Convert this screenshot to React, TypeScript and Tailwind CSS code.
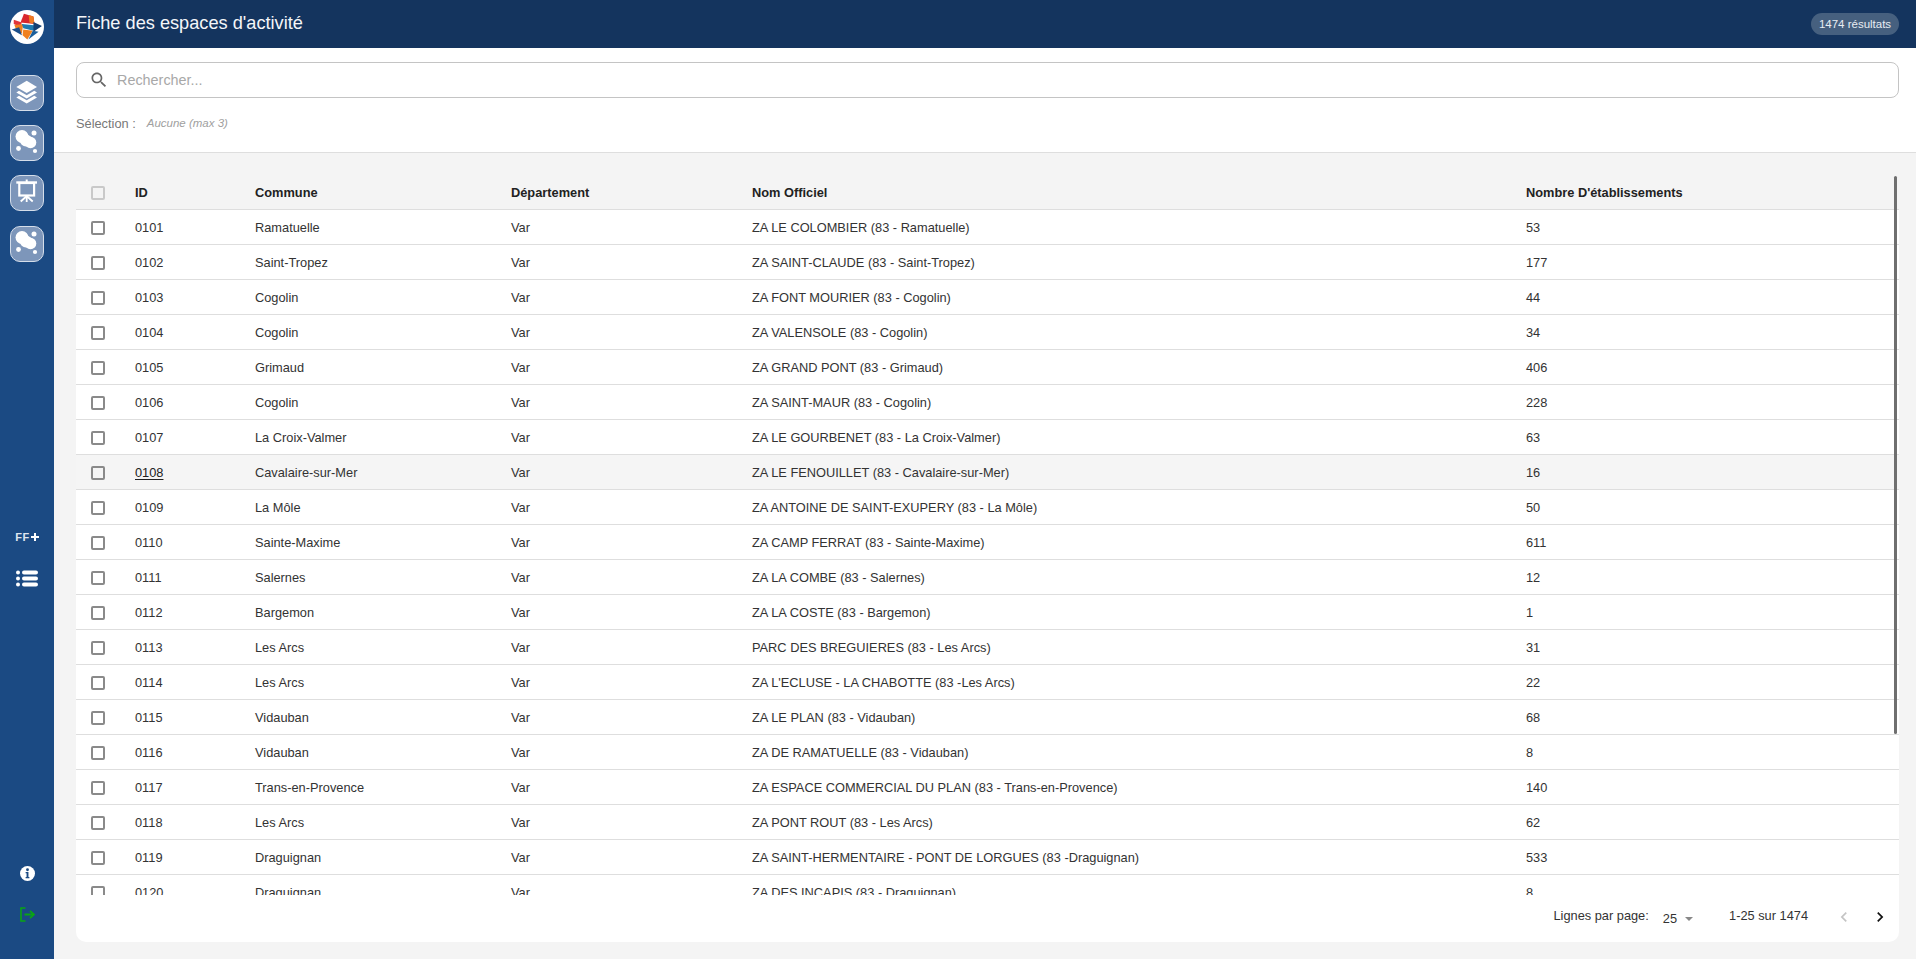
type Row = { id: string; commune: string; nom: string; nb: number };

const rows: Row[] = [
  { id: '0101', commune: 'Ramatuelle', nom: 'ZA LE COLOMBIER (83 - Ramatuelle)', nb: 53 },
  { id: '0102', commune: 'Saint-Tropez', nom: 'ZA SAINT-CLAUDE (83 - Saint-Tropez)', nb: 177 },
  { id: '0103', commune: 'Cogolin', nom: 'ZA FONT MOURIER (83 - Cogolin)', nb: 44 },
  { id: '0104', commune: 'Cogolin', nom: 'ZA VALENSOLE (83 - Cogolin)', nb: 34 },
  { id: '0105', commune: 'Grimaud', nom: 'ZA GRAND PONT (83 - Grimaud)', nb: 406 },
  { id: '0106', commune: 'Cogolin', nom: 'ZA SAINT-MAUR (83 - Cogolin)', nb: 228 },
  { id: '0107', commune: 'La Croix-Valmer', nom: 'ZA LE GOURBENET (83 - La Croix-Valmer)', nb: 63 },
  { id: '0108', commune: 'Cavalaire-sur-Mer', nom: 'ZA LE FENOUILLET (83 - Cavalaire-sur-Mer)', nb: 16 },
  { id: '0109', commune: 'La Môle', nom: 'ZA ANTOINE DE SAINT-EXUPERY (83 - La Môle)', nb: 50 },
  { id: '0110', commune: 'Sainte-Maxime', nom: 'ZA CAMP FERRAT (83 - Sainte-Maxime)', nb: 611 },
  { id: '0111', commune: 'Salernes', nom: 'ZA LA COMBE (83 - Salernes)', nb: 12 },
  { id: '0112', commune: 'Bargemon', nom: 'ZA LA COSTE (83 - Bargemon)', nb: 1 },
  { id: '0113', commune: 'Les Arcs', nom: 'PARC DES BREGUIERES (83 - Les Arcs)', nb: 31 },
  { id: '0114', commune: 'Les Arcs', nom: "ZA L'ECLUSE - LA CHABOTTE (83 -Les Arcs)", nb: 22 },
  { id: '0115', commune: 'Vidauban', nom: 'ZA LE PLAN (83 - Vidauban)', nb: 68 },
  { id: '0116', commune: 'Vidauban', nom: 'ZA DE RAMATUELLE (83 - Vidauban)', nb: 8 },
  { id: '0117', commune: 'Trans-en-Provence', nom: 'ZA ESPACE COMMERCIAL DU PLAN (83 - Trans-en-Provence)', nb: 140 },
  { id: '0118', commune: 'Les Arcs', nom: 'ZA PONT ROUT (83 - Les Arcs)', nb: 62 },
  { id: '0119', commune: 'Draguignan', nom: 'ZA SAINT-HERMENTAIRE - PONT DE LORGUES (83 -Draguignan)', nb: 533 },
  { id: '0120', commune: 'Draguignan', nom: 'ZA DES INCAPIS (83 - Draguignan)', nb: 8 },
];

function Logo() {
  return (
    <svg viewBox="31 31 100 100" className="w-[34px] h-[34px]">
      <circle cx="81" cy="81" r="50" fill="#fff" />
      <polygon points="72,42 100,50 103,72 62,68" fill="#d9262c" />
      <polygon points="86,46 100,50 103,72 88,68" fill="#ee7b22" />
      <polygon points="42,60 66,68 60,80 42,72" fill="#e0353a" />
      <polygon points="44,75 70,72 66,100 50,92" fill="#f0811f" />
      <polygon points="66,72 122,78 100,92 70,85" fill="#1f7ab0" />
      <polygon points="100,66 125,78 100,95" fill="#143f73" />
      <polygon points="70,88 98,92 82,118 68,105" fill="#f0811f" />
      <polygon points="36,88 58,82 66,105" fill="#1d4f8a" />
      <polygon points="98,92 115,95 85,118" fill="#1b5f9b" />
    </svg>
  );
}

function Bubbles() {
  return (
    <svg viewBox="0 0 34 36" className="w-[34px] h-[36px] shrink-0" fill="#fff">
      <circle cx="12" cy="11.500" r="6.500" />
      <circle cx="16" cy="15.500" r="6" />
      <circle cx="20.500" cy="17.500" r="5.800" />
      <circle cx="24" cy="8" r="2.500" />
      <circle cx="8.500" cy="23.500" r="2.400" />
      <circle cx="25" cy="26" r="2.100" />
    </svg>
  );
}

function Layers() {
  return (
    <svg viewBox="0 0 34 36" className="w-[34px] h-[36px] shrink-0" fill="#fff">
      <path d="M16.700 5.700L27 12l-10.300 6L6.300 12z" />
      <path d="M9 15.800l7.700 4.500 7.600-4.500 2.700 1.700-10.300 6-10.400-6z" />
      <path d="M9 20.800l7.700 4.400 7.600-4.400 2.700 1.700-10.300 6-10.400-6z" />
    </svg>
  );
}

function Board() {
  return (
    <svg viewBox="0 0 34 36" className="w-[34px] h-[36px] shrink-0" fill="none" stroke="#fff">
      <path d="M6.300 7.500H27" strokeWidth="2.400" />
      <path d="M16.700 4.500v3" strokeWidth="2" />
      <rect x="9.300" y="8" width="14.800" height="12.500" strokeWidth="2.200" />
      <path d="M16.700 21v6M16.200 21.500l-5.500 5M17.200 21.500l5.500 5" strokeWidth="1.800" />
    </svg>
  );
}

function NavButton({ children }: { children: React.ReactNode }) {
  return (
    <div className="w-[34px] h-[36px] rounded-[10px] border border-[#d5deea] bg-[#7d96ba] flex items-center justify-center">
      {children}
    </div>
  );
}

function Box({ light }: { light?: boolean }) {
  return (
    <div className={`w-[14px] h-[14px] rounded-[2px] border-2 ${light ? 'border-[#c9c9c9]' : 'border-[#8a8a8a]'}`} />
  );
}

export default function App() {
  return (
    <div className="flex h-[959px] w-[1916px] overflow-hidden bg-[#f4f4f4] font-['Liberation_Sans',Arial,sans-serif] text-[#333]">
      <aside className="w-[54px] shrink-0 bg-[#1b4a83] flex flex-col items-center">
        <div className="mt-[10px]"><Logo /></div>
        <div className="mt-[31px] flex flex-col gap-[14px]">
          <NavButton><Layers /></NavButton>
          <NavButton><Bubbles /></NavButton>
          <NavButton><Board /></NavButton>
          <div className="mt-[1px]"><NavButton><Bubbles /></NavButton></div>
        </div>
        <div className="mt-[270px] h-[10px] text-[11px] font-bold leading-[10px] tracking-[0.5px] text-[#dfe6f0] flex items-center">
          FF
          <svg viewBox="0 0 8 8" className="ml-[1px] w-[8px] h-[8px]" fill="none" stroke="#fff" strokeWidth="2">
            <path d="M0 4h8M4 0v8" />
          </svg>
        </div>
        <svg viewBox="0 0 22 17" className="mt-[28px] w-[22px] h-[17px]" fill="#fff">
          <circle cx="2" cy="2.500" r="2" />
          <circle cx="2" cy="8.500" r="2" />
          <circle cx="2" cy="14.500" r="2" />
          <rect x="6" y="0.500" width="16" height="4" rx="2" />
          <rect x="6" y="6.500" width="16" height="4" rx="2" />
          <rect x="6" y="12.500" width="16" height="4" rx="2" />
        </svg>
        <svg viewBox="0 0 16 16" className="mt-auto w-[15px] h-[15px]">
          <circle cx="8" cy="8" r="8" fill="#fff" />
          <path d="M6 6.500h3v5.200h1v1.300H6v-1.300h1V7.800H6z" fill="#1b4a83" />
          <circle cx="8" cy="4" r="1.500" fill="#1b4a83" />
        </svg>
        <svg viewBox="0 0 15 15" className="mt-[26px] mb-[37px] w-[15px] h-[15px]" fill="none" stroke="#0aa514" strokeWidth="1.600">
          <path d="M5.500 1H1v13h4.500" />
          <path d="M4.500 7.500h9" strokeWidth="2" />
          <path d="M10 3.800l4 3.700-4 3.700" strokeWidth="1.800" />
        </svg>
      </aside>

      <main className="flex-1 min-w-0 flex flex-col">
        <header className="h-[48px] bg-[#14345e] flex items-center justify-between pl-[22px] pr-[17px] text-white">
          <h1 className="text-[18.200px] font-normal text-[#f4f6f9]">Fiche des espaces d'activité</h1>
          <span className="h-[22px] w-[88px] text-center rounded-full bg-[#46607f] text-[11.500px] leading-[22px] text-[#e8edf3]">1474 résultats</span>
        </header>

        <section className="h-[105px] bg-white border-b border-[#dedede] pl-[22px] pr-[17px] pt-[14px]">
          <div className="h-[36px] rounded-[8px] border border-[#c4c4c4] flex items-center pl-[12px]">
            <svg viewBox="0 0 24 24" className="w-[20px] h-[20px]" fill="#666">
              <path d="M15.500 14h-.79l-.28-.27C15.410 12.590 16 11.110 16 9.500 16 5.910 13.090 3 9.500 3S3 5.910 3 9.500 5.910 16 9.500 16c1.610 0 3.090-.59 4.230-1.570l.27.28v.79l5 4.990L20.490 19l-4.990-5zm-6 0C7.010 14 5 11.990 5 9.500S7.010 5 9.500 5 14 7.010 14 9.500 11.990 14 9.500 14z" />
            </svg>
            <span className="ml-[8px] mt-[2px] text-[14.400px] text-[#a8a8a8]">Rechercher...</span>
          </div>
          <div className="mt-[16px] flex items-center text-[12.800px]">
            <span className="text-[#777]">Sélection :</span>
            <span className="ml-[11px] text-[11.500px] italic text-[#a0a0a0]">Aucune (max 3)</span>
          </div>
        </section>

        <section className="flex-1 min-h-0 pl-[22px] pr-[17px] pt-[19px] pb-[17px] relative">
          <div className="h-full rounded-b-[10px] bg-white flex flex-col overflow-hidden">
            <div className="h-[723px] overflow-hidden">
              <div className="h-[38px] pt-[5px] bg-[#f4f4f4] border-b border-[#dedede] flex items-center text-[12.800px] font-bold text-[#222]">
                <div className="w-[59px] pl-[15px]"><Box light /></div>
                <div className="w-[120px]">ID</div>
                <div className="w-[256px]">Commune</div>
                <div className="w-[241px]">Département</div>
                <div className="w-[774px]">Nom Officiel</div>
                <div>Nombre D'établissements</div>
              </div>
              {rows.map((r) => (
                <div
                  key={r.id}
                  className={`h-[35px] pt-[1px] border-b border-[#dedede] flex items-center text-[12.800px] ${r.id === '0108' ? 'bg-[#f5f5f5]' : 'bg-white'}`}
                >
                  <div className="w-[59px] pl-[15px]"><Box /></div>
                  <div className="w-[120px]">
                    <span className={r.id === '0108' ? 'underline underline-offset-2 text-[#222]' : ''}>{r.id}</span>
                  </div>
                  <div className="w-[256px]">{r.commune}</div>
                  <div className="w-[241px]">Var</div>
                  <div className="w-[774px]">{r.nom}</div>
                  <div>{r.nb}</div>
                </div>
              ))}
            </div>
            <div className="flex-1 flex items-center justify-end text-[12.800px] text-[#333] pr-[9px]">
              <span className="mb-[6px]">Lignes par page:</span>
              <span className="ml-[14px]">25</span>
              <span className="ml-[8px] w-0 h-0 border-x-[4px] border-x-transparent border-t-[4px] border-t-[#888]" />
              <span className="ml-[36px] mb-[6px]">1-25 sur 1474</span>
              <svg viewBox="0 0 24 24" className="ml-[26px] mb-[3px] w-[20px] h-[20px]" fill="#c4c4c4">
                <path d="M15.410 7.410L14 6l-6 6 6 6 1.410-1.410L10.830 12z" />
              </svg>
              <svg viewBox="0 0 24 24" className="ml-[16px] mb-[3px] w-[20px] h-[20px]" fill="#111">
                <path d="M10 6L8.590 7.410 13.170 12l-4.580 4.590L10 18l6-6z" />
              </svg>
            </div>
          </div>
          <div className="absolute top-[23px] right-[19px] w-[3px] h-[558px] rounded-full bg-[#6f6f6f]" />
        </section>
      </main>
    </div>
  );
}
